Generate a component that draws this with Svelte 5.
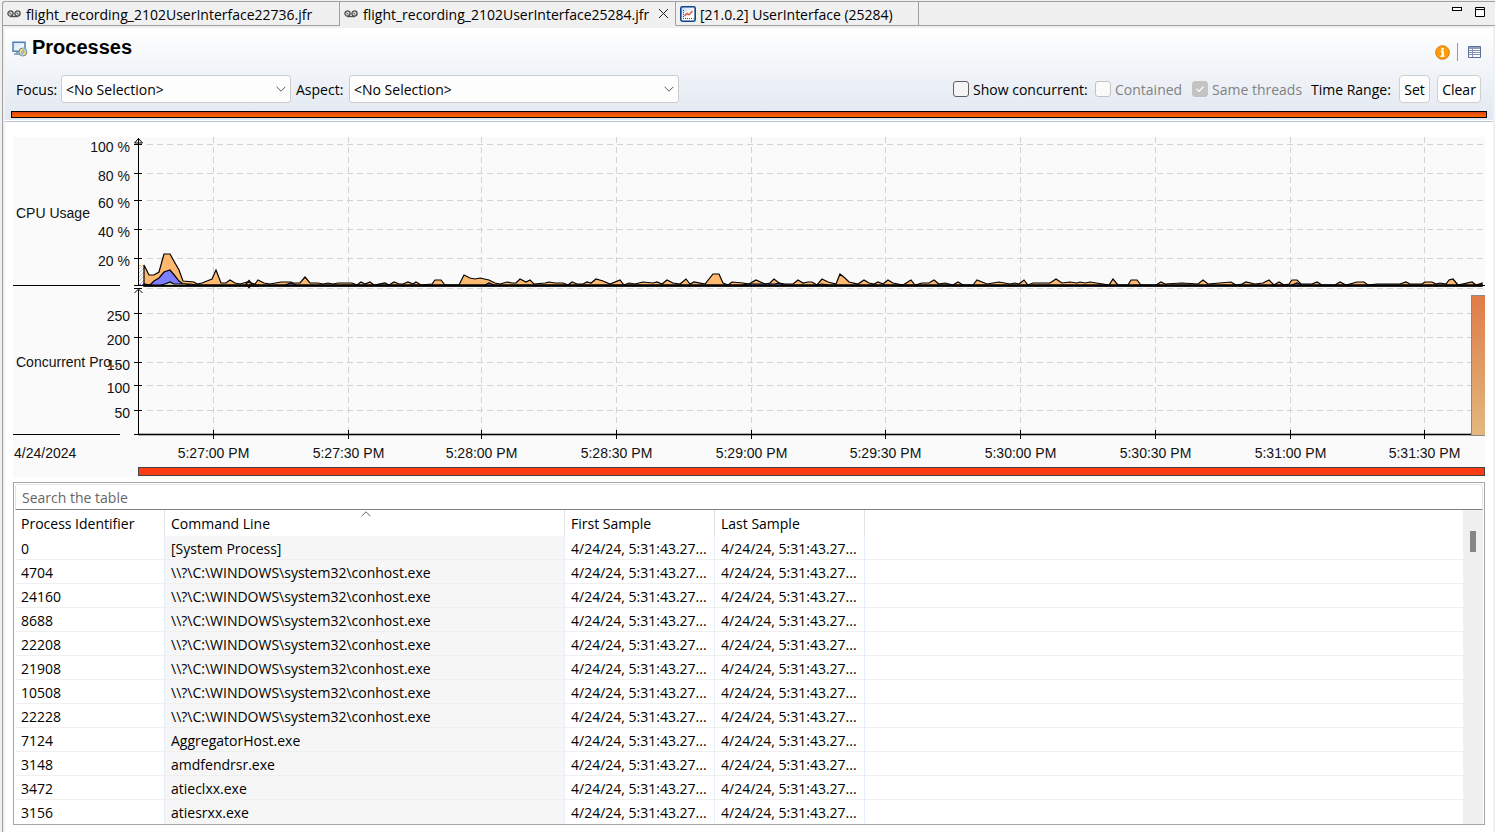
<script>
  let chartWidth = $state(1472);

  const LEFT = 13;
  const AXIS = 138;
  const PLOT = 1347;
  let end = $derived(LEFT + chartWidth);
  let scale = $derived((end - AXIS) / PLOT);
  const sx = (x, s) => AXIS + (x - AXIS) * s;

  const cpuTicks = [
    { y: 144, label: '100 %', ty: 152 },
    { y: 173, label: '80 %', ty: 181 },
    { y: 200, label: '60 %', ty: 208 },
    { y: 229, label: '40 %', ty: 237 },
    { y: 258, label: '20 %', ty: 266 }
  ];
  const processTicks = [
    { y: 313, label: '250' },
    { y: 337, label: '200' },
    { y: 362, label: '150' },
    { y: 385, label: '100' },
    { y: 410, label: '50' }
  ];
  const times = [
    [213, '5:27:00 PM'], [348, '5:27:30 PM'], [481, '5:28:00 PM'], [616, '5:28:30 PM'], [751, '5:29:00 PM'],
    [885, '5:29:30 PM'], [1020, '5:30:00 PM'], [1155, '5:30:30 PM'], [1290, '5:31:00 PM'], [1424, '5:31:30 PM']
  ];

  const machine =
    '144,265 149,275 154,275 159,272 164,254 170,254 175,263 179,270 183,281 194,282 197,284 202,283 207,281 212,279 216,270 221,283 226,283 230,280 235,283 240,284 247,282 255,284 258,280 264,283 270,284 281,282 291,282 ' +
    '293,283 300,283 305,277 310,283 318,283 323,284 328,283 333,284 338,283 352,283 357,285 361,282 365,284 370,282 374,285 385,283 389,285 394,282 399,284 403,284 408,282 413,284 416,282 421,285 432,284 435,280 441,280 445,285 ' +
    '459,285 464,275 470,278 475,279 480,278 489,280 495,283 500,284 507,282 512,283 516,283 520,279 526,282 530,280 534,284 545,283 549,282 555,283 563,283 568,285 572,282 577,284 583,284 587,282 591,283 596,279 603,281 610,284 ' +
    '620,280 624,285 629,283 635,284 643,282 653,283 657,282 662,284 667,280 673,283 680,284 686,279 690,284 694,282 705,284 713,274 719,274 723,283 728,285 732,282 743,283 749,284 756,280 765,284 770,283 774,279 779,283 785,284 ' +
    '793,284 798,280 803,283 808,282 812,282 817,285 822,279 828,282 836,284 840,274 845,278 849,282 858,284 864,280 869,283 874,284 878,282 883,284 888,280 893,283 903,285 911,280 915,285 922,283 929,283 934,280 939,284 945,283 ' +
    '953,285 958,282 963,285 973,285 977,280 987,284 999,282 1010,284 1015,283 1019,284 1024,280 1028,285 1033,283 1050,283 1056,279 1062,283 1070,282 1077,283 1080,282 1085,283 1090,282 1103,284 1109,285 1113,279 1118,285 1128,285 ' +
    '1131,280 1137,280 1141,285 1156,285 1161,282 1165,284 1182,283 1198,284 1203,280 1208,284 1231,282 1236,285 1242,284 1246,282 1255,284 1263,283 1269,280 1274,285 1279,282 1284,285 1289,284 1292,280 1297,280 1301,284 1312,284 ' +
    '1317,282 1322,285 1335,285 1340,282 1346,285 1357,282 1364,282 1368,285 1377,284 1400,284 1406,282 1410,284 1422,284 1425,282 1432,282 1436,284 1440,283 1446,284 1449,280 1453,279 1458,285 1472,282 1476,285 1482,283';
  const jvm =
    '144,284 150,285 154,281 159,278 164,272 170,270 175,276 179,281 183,284 190,284 197,285 285,285 291,283 296,285 485,285 489,283 494,285 742,285 748,284 775,284 779,283 783,285 817,285 822,284 828,285 1292,285 1297,283 1302,285 1482,285';
  const user = '144,285 161,285 165,284 170,282 174,284 180,284 185,284 190,285 1482,285';

  const place = (series, s) =>
    series.split(' ').map((p) => {
      const [x, y] = p.split(',').map(Number);
      return `${sx(x, s)},${y}`;
    }).join(' L');
  const area = (series, s) => `M${sx(144, s)},286 L${place(series, s)} L${sx(1482, s)},286 Z`;

  const stamp = '4/24/24, 5:31:43.27...';
  const conhost = '\\\\?\\C:\\WINDOWS\\system32\\conhost.exe';
  const rows = [
    ['0', '[System Process]'],
    ['4704', conhost],
    ['24160', conhost],
    ['8688', conhost],
    ['22208', conhost],
    ['21908', conhost],
    ['10508', conhost],
    ['22228', conhost],
    ['7124', 'AggregatorHost.exe'],
    ['3148', 'amdfendrsr.exe'],
    ['3472', 'atieclxx.exe'],
    ['3156', 'atiesrxx.exe']
  ];
</script>

{#snippet tape()}
  <svg width="14" height="8" viewBox="0 0 14 8" aria-hidden="true">
    <g fill="#d9d9d9" stroke="#505050" stroke-width="1.3">
      <circle cx="3.5" cy="3.5" r="2.6" /><circle cx="10.5" cy="3.5" r="2.6" />
    </g>
    <path d="M3 6.6h8" stroke="#505050" stroke-width="1.2" />
    <path d="M2.3 2.7l2.2 1.8M9.3 2.7l2.2 1.8" stroke="#505050" stroke-width="1" />
  </svg>
{/snippet}

{#snippet chevron()}
  <svg class="chevron" width="10" height="6" viewBox="0 0 10 6" aria-hidden="true">
    <path d="M.6 .8 5 5.2 9.4 .8" fill="none" stroke="#5c5c5c" stroke-width="1" />
  </svg>
{/snippet}

<div class="frame">
  <div class="tabs">
    <button class="tab first">{@render tape()}<span>flight_recording_2102UserInterface22736.jfr</span></button>
    <div class="tab active">
      {@render tape()}<span>flight_recording_2102UserInterface25284.jfr</span>
      <button class="close" aria-label="Close">
        <svg width="11" height="11" viewBox="0 0 11 11"><path d="M1 1l9 9M10 1l-9 9" stroke="#222" stroke-width="1" /></svg>
      </button>
    </div>
    <button class="tab third">
      <svg width="16" height="16" viewBox="0 0 16 16" aria-hidden="true">
        <defs><linearGradient id="mon" x1="0" y1="0" x2="1" y2="1"><stop offset="0" stop-color="#b9d4f2" /><stop offset=".6" stop-color="#fff" /></linearGradient></defs>
        <rect x=".8" y=".8" width="14.4" height="14.4" rx="1.6" fill="url(#mon)" stroke="#0d4585" stroke-width="1.6" />
        <path d="M3.500 4v9M3 12.500h10.500" stroke="#2d4f80" stroke-dasharray="1 1" fill="none" />
        <path d="M4.500 10 7 7.500l2 1.300L12.500 5" fill="none" stroke="#e33b1c" stroke-width="1.200" />
      </svg>
      <span>[21.0.2] UserInterface (25284)</span>
    </button>
    <div class="window-tools">
      <button aria-label="Minimize"><svg width="11" height="12" viewBox="0 0 11 12"><rect x=".5" y="1.500" width="9" height="3" fill="#fff" stroke="#000" /></svg></button>
      <button aria-label="Maximize"><svg width="11" height="12" viewBox="0 0 11 12"><path d="M.5 1.500h9v9h-9zM.5 3.500h9" fill="#fff" stroke="#000" /></svg></button>
    </div>
  </div>

  <main>
    <header>
      <div class="title-row">
        <svg width="16" height="16" viewBox="0 0 16 16" aria-hidden="true">
          <defs><linearGradient id="scr" x1="0" y1="0" x2="1" y2="1"><stop offset="0" stop-color="#cfe6fb" /><stop offset="1" stop-color="#fff" /></linearGradient></defs>
          <path d="M1 1.200h12v9H1z" fill="url(#scr)" stroke="#4f7fb8" stroke-width="1.500" />
          <path d="M2 13h6M5 11v2" stroke="#7393ba" stroke-width="1.400" />
          <circle cx="10.800" cy="11" r="4" fill="#f0e36a" stroke="#6b7f93" />
          <path d="M11 7a4 4 0 0 1 3.500 2.500L11 11zM11 15a4 4 0 0 1-3.500-2.500L11 11z" fill="#a9c7e6" />
          <circle cx="10.800" cy="11" r="1.200" fill="#fff" stroke="#6b7f93" stroke-width=".8" />
        </svg>
        <h1>Processes</h1>
        <div class="title-tools">
          <button aria-label="Results">
            <svg width="15" height="15" viewBox="0 0 15 15"><circle cx="7.500" cy="7.500" r="6.800" fill="#ff9c08" stroke="#d57a05" /><circle cx="7.500" cy="4" r="1.300" fill="#fff" /><path d="M5.700 6.400h2v4.600M5.500 11.200h4" fill="none" stroke="#fff" stroke-width="1.600" /><path d="M7.700 6v5" stroke="#fff" stroke-width="2" /></svg>
          </button>
          <i></i>
          <button aria-label="Table settings">
            <svg width="13" height="12" viewBox="0 0 13 12"><path d="M.5.5h12v11H.5z" fill="#fff" stroke="#5a6e98" /><path d="M1 1h11v2H1z" fill="#8fa0c2" /><path d="M1 4.500h11M1 6.500h11M1 8.500h11M4.500 1v10" stroke="#8492b3" /></svg>
          </button>
        </div>
      </div>

      <div class="controls">
        <label class="lead-focus" for="focus">Focus:</label>
        <div class="combo w-focus"><select id="focus"><option>&lt;No Selection&gt;</option></select>{@render chevron()}</div>
        <label class="lead-aspect" for="aspect">Aspect:</label>
        <div class="combo w-aspect"><select id="aspect"><option>&lt;No Selection&gt;</option></select>{@render chevron()}</div>
        <div class="range">
          <label class="check show"><input type="checkbox" /><span>Show concurrent:</span></label>
          <label class="check contained off"><input type="checkbox" disabled /><span>Contained</span></label>
          <label class="check same off"><input type="checkbox" checked disabled /><span>Same threads</span></label>
          <span class="time-range">Time Range:</span>
          <button class="push set">Set</button>
          <button class="push clear">Clear</button>
        </div>
      </div>
      <div class="range-bar"></div>
    </header>

    <section class="chart" bind:clientWidth={chartWidth}>
      <svg width={chartWidth} height="341" viewBox="{LEFT} 137 {chartWidth} 341" role="img" aria-label="CPU usage and concurrent processes">
        <defs>
          <linearGradient id="bar" x1="0" y1="0" x2="0" y2="1"><stop offset="0" stop-color="#e07c48" /><stop offset="1" stop-color="#e2b880" /></linearGradient>
          <pattern id="hatch" width="4" height="4" patternUnits="userSpaceOnUse"><path d="M0 4 4 0" stroke="#999" stroke-width=".6" /></pattern>
        </defs>

        <g class="grid">
          {#each cpuTicks as t}<path d="M147 {t.y + .5}H{end}" />{/each}
          <path d="M147 288.500H{end}" />
          {#each processTicks as t}<path d="M147 {t.y + .5}H{end}" />{/each}
          {#each times as [x]}<path d="M{sx(x, scale) + .5} 137V434" />{/each}
        </g>

        <rect x="139" y="265" width="5" height="20" fill="url(#hatch)" />
        <path d="M139 265.500h5" stroke="#ffb56c" stroke-dasharray="2 1" />
        <path d="M139 284.500h5" stroke="#7a7aff" stroke-dasharray="2 1" />
        <g stroke="#000" stroke-width="1.200">
          <path d={area(machine, scale)} fill="#ffb870" />
          <path d={area(jvm, scale)} fill="#7d7dff" />
          <path d={area(user, scale)} fill="#c8c8a8" />
        </g>
        <path d="M{sx(249, scale)} 280.500l3 3.500-3 3.500-3-3.500z" fill="none" stroke="#000" stroke-width="1.200" />

        <rect x={end - 13.5} y="295.500" width="16" height="140" fill="url(#bar)" stroke="#888" />
        <path d="M138 434.500H{end - 14}" stroke="#6a6a6a" stroke-width="2" />

        <g class="axis">
          <path d="M13 285.500H120M13 434.500H120" />
          <path d="M138.500 138V286M138.500 290V435" />
          <path d="M134 285.500H{end}M134 434.500H{end - 14}" />
          {#each cpuTicks as t}<path d="M134 {t.y + .5}h8" />{/each}
          {#each processTicks as t}<path d="M134 {t.y + .5}h8" />{/each}
          <path d="M134.500 143l4-4.500 4 4.500zM134 288.500h8M134.500 293l4-4 4 4" fill="none" />
          {#each times as [x]}<path d="M{sx(x, scale) + .5} 430v9" />{/each}
        </g>

        <g class="words">
          {#each cpuTicks as t}<text x="130" y={t.ty} text-anchor="end">{t.label}</text>{/each}
          {#each processTicks as t}<text x="130" y={t.y + 8} text-anchor="end">{t.label}</text>{/each}
          <text x="16" y="218">CPU Usage</text>
          <text x="16" y="367">Concurrent Pro...</text>
          <text x="14" y="458">4/24/2024</text>
          {#each times as [x, label]}<text x={sx(x, scale) + .5} y="458" text-anchor="middle">{label}</text>{/each}
        </g>
        <rect x="138.500" y="467.500" width={end - 139} height="8" fill="#ff3b14" stroke="#444" />
      </svg>
    </section>

    <section class="list">
      <input class="search" type="text" placeholder="Search the table" aria-label="Search the table" />
      <div class="body">
        <table>
          <colgroup><col class="c1" /><col class="c2" /><col class="c3" /><col class="c3" /><col /></colgroup>
          <thead>
            <tr>
              <th>Process Identifier</th>
              <th class="sorted">Command Line
                <svg width="10" height="6" viewBox="0 0 10 6" aria-hidden="true"><path d="M.6 5.200 5 .8 9.400 5.200" fill="none" stroke="#666" /></svg>
              </th>
              <th>First Sample</th>
              <th>Last Sample</th>
              <th></th>
            </tr>
          </thead>
          <tbody>
            {#each rows as [pid, command]}
              <tr><td>{pid}</td><td class="cmd">{command}</td><td>{stamp}</td><td>{stamp}</td><td></td></tr>
            {/each}
          </tbody>
        </table>
        <div class="scroll"><div class="thumb"></div></div>
      </div>
    </section>
  </main>
</div>

<style>
  :global(body) { margin: 0; background: #f0f0f0; }
  * { box-sizing: border-box; }
  .frame {
    font: 14px/20px "Open Sans", "Noto Sans", sans-serif;
    color: #000;
    margin: 0 0 0 2px;
    border-top: 1px solid #a0a0a0;
    border-left: 1px solid #a0a0a0;
    border-top-left-radius: 3px;
    min-height: calc(100vh - 1px);
    display: flex;
    flex-direction: column;
  }
  :global(#app) { padding-top: 1px; }
  button { font: inherit; color: inherit; border: 0; padding: 0; background: none; }
  svg { display: block; flex: none; }

  .tabs { display: flex; height: 24px; }
  .tab { display: flex; align-items: center; border-right: 1px solid #a0a0a0; border-bottom: 1px solid #a0a0a0; white-space: nowrap; }
  .tab span { flex: 1; text-align: left; padding-top: 2px; }
  .first { width: 337px; padding-left: 4px; gap: 5px; }
  .active { width: 336px; padding-left: 4px; padding-right: 6px; gap: 5px; border-bottom-color: transparent; }
  .third { width: 243px; padding-left: 4px; gap: 4px; }
  .window-tools { flex: 1; border-bottom: 1px solid #a0a0a0; display: flex; justify-content: flex-end; align-items: flex-start; gap: 12px; padding: 4px 9px 0 0; }

  main { flex: 1; margin: 2px 2px 0; background: #fff; }
  header { height: 94px; background: linear-gradient(#fff, #e1e8f2 92px, #fff 92px, #fff 93px, #b9c6d6 93px); display: flex; flex-direction: column; }
  .title-row { display: flex; align-items: flex-start; height: 47px; padding: 7px 12px 0 7px; gap: 4px; }
  .title-row > svg { margin-top: 6px; }
  h1 { margin: 0; font: bold 20px/24px "Liberation Sans", Arial, sans-serif; flex: 1; }
  .title-tools { display: flex; align-items: center; gap: 7px; height: 18px; margin-top: 8px; }
  .title-tools i { width: 1px; height: 18px; background: #9a9a9a; margin-right: 3px; }
  .controls { display: flex; align-items: center; height: 28px; padding: 0 12px 0 11px; gap: 5px; white-space: nowrap; }
  .lead-focus { width: 40px; padding-top: 2px; }
  .lead-aspect { width: 48px; padding-top: 2px; }
  .combo { position: relative; display: flex; height: 28px; }
  .w-focus { width: 230px; }
  .w-aspect { width: 330px; }
  select { appearance: none; width: 100%; border: 1px solid #ccc; border-radius: 3px; background: #fdfdfd; font: inherit; color: inherit; padding: 2px 4px 0; }
  .chevron { position: absolute; right: 5px; top: 11px; pointer-events: none; }
  .range { flex: 1; display: flex; justify-content: flex-end; align-items: center; }
  .check { display: flex; align-items: center; gap: 4px; }
  .check span, .time-range { padding-top: 2px; }
  .check input { appearance: none; margin: 0; width: 16px; height: 16px; border: 1px solid #5f5f5f; border-radius: 3px; background: #f5f5f5; }
  .off { color: #828282; }
  .off input { border-color: #c3c3c3; background: #fafafa; }
  .off input:checked { background: #c3c3c3 url("data:image/svg+xml,%3Csvg xmlns='http://www.w3.org/2000/svg' viewBox='0 0 14 14'%3E%3Cpath d='M3.500 7 6 9.500 10.500 4.500' fill='none' stroke='white' stroke-width='1.200'/%3E%3C/svg%3E"); }
  .show { width: 142px; }
  .contained { width: 97px; }
  .same { width: 119px; }
  .time-range { width: 88px; }
  .push { height: 28px; border: 1px solid #d0d0d0; border-radius: 4px; background: #fdfdfd; padding-top: 2px; }
  .set { width: 31px; margin-right: 7px; }
  .clear { width: 44px; }
  .range-bar { height: 7px; margin: 8px 6px 0; border: 1px solid #000; background: linear-gradient(#dd4313, #ff6a00); }

  .chart { margin: 15px 8px 0; background: #fafafa; overflow: hidden; }
  .grid path { stroke: #d3d3d3; stroke-dasharray: 6 4; fill: none; }
  .axis path { stroke: #000; fill: none; }
  .words text { font: 14px "Liberation Sans", Arial, sans-serif; fill: #111; }

  .list { margin: 4px 8px 7px; border: 1px solid #a5a5ab; padding: 1px 1px 0; }
  .search { display: block; width: 100%; height: 26px; border: 1px solid #e6e6e6; border-bottom-color: #808080; border-radius: 3px 3px 0 0; padding: 0 6px; font: inherit; background: #fff; outline: 0; }
  .search::placeholder { color: #666; opacity: 1; }
  .body { display: flex; }
  table { flex: 1; table-layout: fixed; border-collapse: separate; border-spacing: 0; width: 100%; }
  .c1 { width: 150px; }
  .c2 { width: 400px; }
  .c3 { width: 150px; }
  th, td { padding: 2px 0 0 6px; text-align: left; font-weight: normal; white-space: nowrap; overflow: hidden; }
  th { height: 26px; border-right: 1px solid #e2e2e2; position: relative; }
  th:last-child, td:last-child { border-right: 0; }
  td { height: 24px; border-right: 1px solid #e6eef9; border-bottom: 1px solid #efefef; }
  tr:last-child td { border-bottom-color: transparent; }
  .cmd { background: #f6f6f6; }
  .sorted svg { position: absolute; top: 1px; left: 196px; }
  .scroll { width: 20px; background: #f0f0f0; padding: 21px 7px; }
  .thumb { height: 21px; background: #868686; }
</style>
